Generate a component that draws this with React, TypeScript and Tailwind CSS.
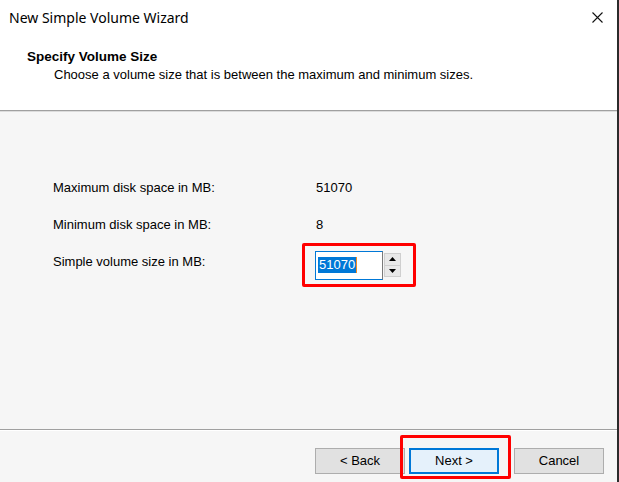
import { useState } from 'react';

const sans = { fontFamily: '"Liberation Sans", Arial, sans-serif' };
const ui = { fontFamily: '"Noto Sans", "Open Sans", sans-serif' };

function SpinBox({ value }: { value: string }) {
  return (
    <div className="relative mt-[7px] flex items-center">
      <div className="flex h-[29px] w-[68px] items-center border border-[#0078d7] border-r-[#7a7a7a] bg-white pl-[2px]">
        <span className="bg-[#0078d7] px-[1px] text-[13px] leading-[16px] text-white">{value}</span>
        <span className="h-[16px] w-[1px] bg-[#f08a24]" />
      </div>
      <div className="ml-[1px] flex h-[24px] w-[17px] flex-col border border-[#cfcfcf] bg-[#e8e8e8]">
        <div className="flex flex-1 items-center justify-center border-b border-[#cfcfcf]">
          <svg width="7" height="4" viewBox="0 0 7 4"><path d="M3.5 0L7 4H0z" fill="#000" /></svg>
        </div>
        <div className="flex flex-1 items-center justify-center">
          <svg width="7" height="4" viewBox="0 0 7 4"><path d="M0 0h7L3.5 4z" fill="#000" /></svg>
        </div>
      </div>
      <div className="pointer-events-none absolute left-[-13px] top-[-8px] h-[44px] w-[114px] rounded-[2px] border-[3px] border-[#ff0000]" />
    </div>
  );
}

function WinButton({ label, focused }: { label: string; focused?: boolean }) {
  return (
    <button
      className={
        'flex h-[26px] w-[90px] items-center justify-center text-[13px] text-black ' +
        (focused ? 'border-2 border-[#0078d7] bg-[#e5f1fb]' : 'border border-[#adadad] bg-[#e1e1e1]')
      }
      style={sans}
    >
      {label}
    </button>
  );
}

export default function App() {
  const [size] = useState('51070');
  const rows = [
    { label: 'Maximum disk space in MB:', value: '51070' },
    { label: 'Minimum disk space in MB:', value: '8' },
  ];

  return (
    <div className="flex h-[482px] w-[619px] overflow-hidden bg-white">
      <div className="flex min-w-0 flex-1 flex-col">
        {/* title bar */}
        <div className="flex h-[34px] items-center justify-between bg-white pl-[9px] pr-[14px]">
          <span className="text-[14px] text-black" style={ui}>New Simple Volume Wizard</span>
          <svg width="11" height="11" viewBox="0 0 11 11">
            <path d="M0.5 0.5L10.5 10.5M10.5 0.5L0.5 10.5" stroke="#111" strokeWidth="1.1" />
          </svg>
        </div>

        {/* wizard header */}
        <div className="h-[76px] bg-white pt-[14px]" style={sans}>
          <div className="pl-[27px] text-[13.5px] font-bold leading-[18px] text-black">Specify Volume Size</div>
          <div className="pl-[54px] text-[13px] leading-[18px] text-black">
            Choose a volume size that is between the maximum and minimum sizes.
          </div>
        </div>
        <div className="h-[1px] bg-[#a0a0a0]" />
        <div className="h-[1px] bg-[#dcdcdc]" />

        {/* body */}
        <div className="flex flex-1 flex-col bg-[#f6f6f6] pl-[53px] pt-[57px] text-[13px] text-black" style={sans}>
          {rows.map((r) => (
            <div key={r.label} className="flex h-[37px] items-center">
              <span className="w-[263px]">{r.label}</span>
              <span>{r.value}</span>
            </div>
          ))}
          <div className="flex h-[37px] items-center">
            <span className="w-[262px]">Simple volume size in MB:</span>
            <SpinBox value={size} />
          </div>
        </div>

        {/* footer */}
        <div className="h-[1px] bg-[#a0a0a0]" />
        <div className="h-[1px] bg-[#ffffff]" />
        <div className="relative flex h-[51px] items-start bg-[#f6f6f6] pl-[315px] pt-[17px]">
          <WinButton label="< Back" />
          <div className="ml-[4px]">
            <WinButton label="Next >" focused />
          </div>
          <div className="ml-[15px]">
            <WinButton label="Cancel" />
          </div>
          <div className="pointer-events-none absolute left-[400px] top-[4px] h-[44px] w-[111px] rounded-[2px] border-[3px] border-[#ff0000]" />
        </div>
      </div>
      <div className="w-[2px] bg-[#2b2b2b]" />
    </div>
  );
}
